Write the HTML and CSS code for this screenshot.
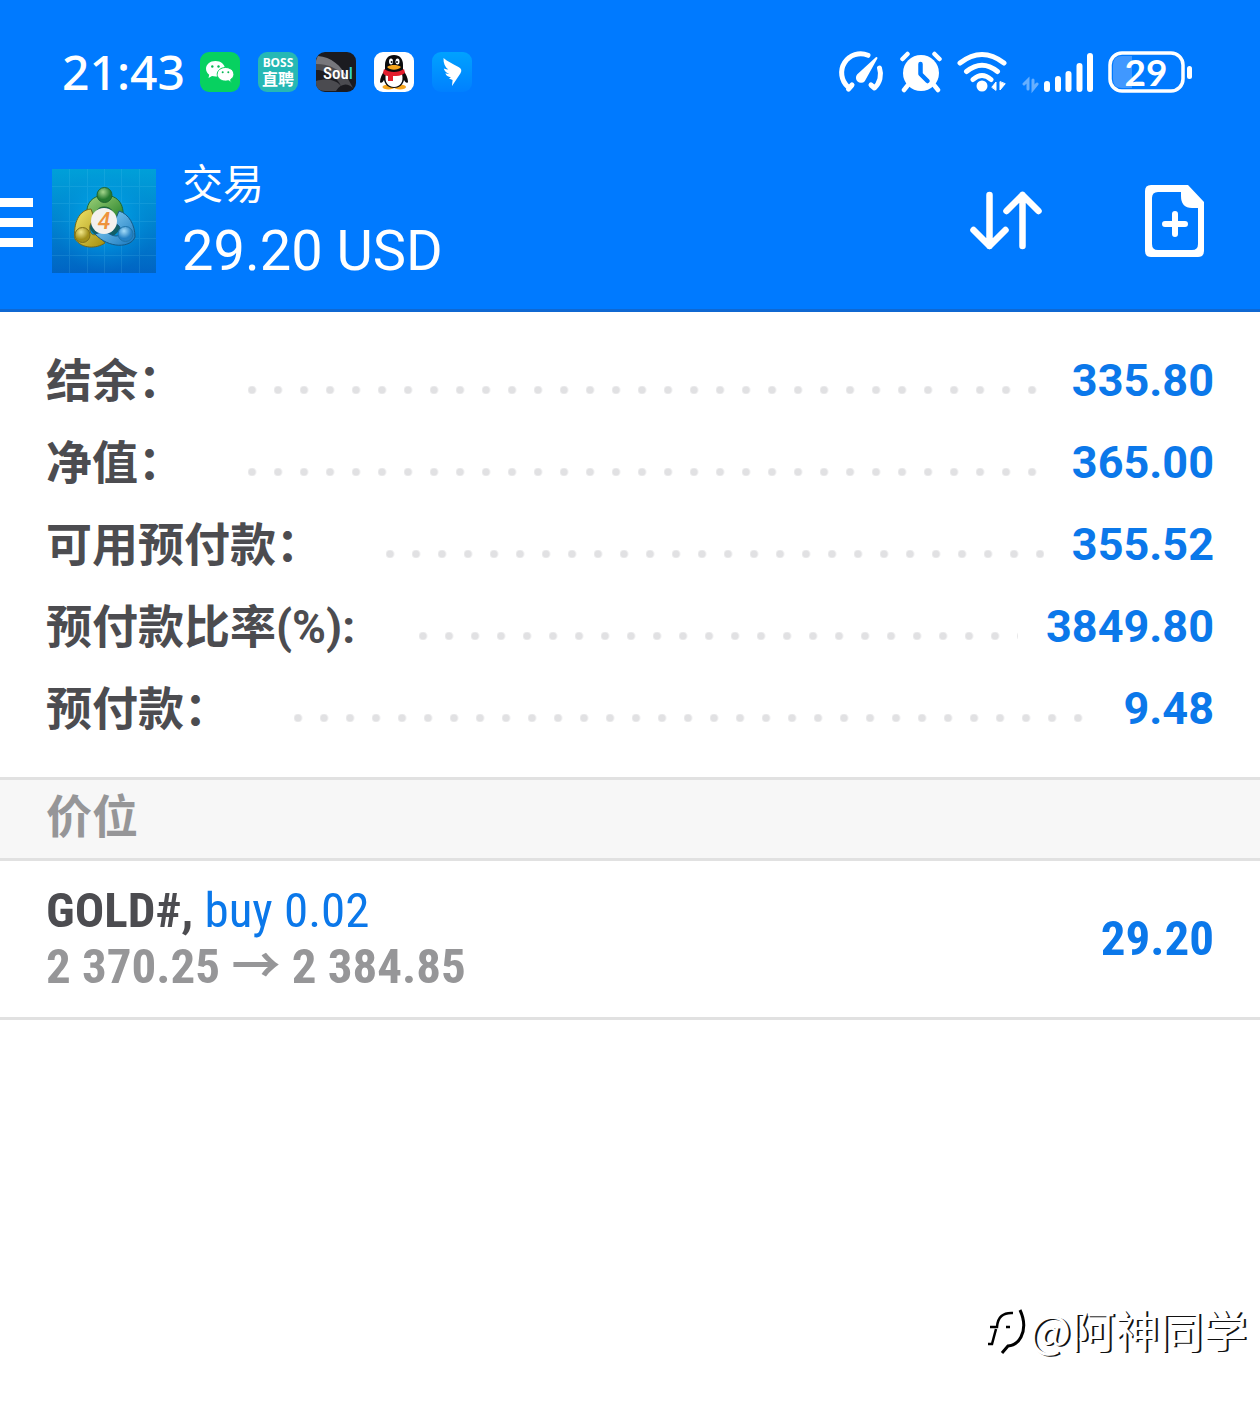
FILE: index.html
```html
<!DOCTYPE html>
<html lang="zh-CN">
<head>
<meta charset="utf-8">
<meta name="viewport" content="width=device-width, initial-scale=1">
<title>交易</title>
<link rel="stylesheet" href="styles.css">
</head>
<body>
<header class="header">
  <div class="status">
    <div class="status-left">
      <time class="clock">21:43</time>
      <svg class="app" viewBox="0 0 40 40" aria-hidden="true">
        <rect width="40" height="40" rx="9" fill="#07d160"/>
        <path d="M15.500 9C10 9 6 12.500 6 16.800c0 2.400 1.200 4.400 3.200 5.900L8.500 26l3.500-1.900c1.200.3 2.300.5 3.500.5 5.300 0 9.500-3.400 9.500-7.800S20.800 9 15.500 9z" fill="#fff"/>
        <path d="M25.500 15.500c-4.700 0-8.300 3-8.300 6.800s3.600 6.800 8.300 6.800c1 0 2-.2 2.900-.4l3 1.700-.8-2.800c2-1.300 3.300-3.100 3.300-5.300 0-3.800-3.700-6.800-8.400-6.800z" fill="#fff" stroke="#07d160"/>
        <g fill="#07b955"><circle cx="12.300" cy="14.500" r="1.200"/><circle cx="18.500" cy="14.500" r="1.200"/><circle cx="22.700" cy="20.300" r="1"/><circle cx="28.300" cy="20.300" r="1"/></g>
      </svg>
      <svg class="app" viewBox="0 0 40 40" aria-hidden="true">
        <rect width="40" height="40" rx="9" fill="#26b8b4"/>
        <text class="boss" x="20" y="15" text-anchor="middle">BOSS</text>
        <text class="boss-cn" x="20" y="33" text-anchor="middle">直聘</text>
      </svg>
      <svg class="app" viewBox="0 0 40 40" aria-hidden="true">
        <rect width="40" height="40" rx="9" fill="#1b1b20"/>
        <path d="M1 5C14 5 27 15 37 36c-5-5-12-5-17 3H9C3 39 0 36 0 31V9z" fill="#4b4b50"/>
        <path d="M2 4c13 1 23 9 30 23C24 18 14 12 0 12V9z" fill="#77777c"/>
        <path d="M3 18c9 2 18 7 22 16C18 26 8 27 0 29V18z" fill="#1d1d22"/>
        <text class="soul" x="7" y="27">Sou<tspan fill="#36d6c3">l</tspan></text>
      </svg>
      <svg class="app" viewBox="0 0 40 40" aria-hidden="true">
        <rect width="40" height="40" rx="9" fill="#fff"/>
        <ellipse cx="14.500" cy="35" rx="6" ry="2.500" fill="#f8a51b"/><ellipse cx="26" cy="35" rx="6" ry="2.500" fill="#f8a51b"/>
        <path d="M20 3c-6 0-9 4-9 10v5c-3 4-5 8-5 12 1 2 3 0 4-2 1 5 5 8 10 8s9-3 10-8c1 2 3 4 4 2 0-4-2-8-5-12v-5c0-6-3-10-9-10z" fill="#0b0b0d"/>
        <path d="M12 22c-2 8 2 13 8 13s10-5 8-13z" fill="#fff"/>
        <path d="M10 17c6 4 14 4 20 0l1 4c-4 3-8 3-12 3v5h-5v-5c-2 0-4-1-5-3z" fill="#e31e2e"/>
        <ellipse cx="17" cy="9.500" rx="2" ry="3" fill="#fff"/><ellipse cx="23.500" cy="9.500" rx="2" ry="3" fill="#fff"/>
        <circle cx="17.600" cy="10" r="1" fill="#111"/><circle cx="23" cy="10" r="1" fill="#111"/>
        <path d="M13 15c4-2.600 10-2.600 14 0-3 3.500-11 3.500-14 0z" fill="#f8a51b"/>
      </svg>
      <svg class="app" viewBox="0 0 40 40" aria-hidden="true">
        <defs><linearGradient id="ding" x1="0" y1="0" x2="0" y2="1"><stop offset="0" stop-color="#00a2ff"/><stop offset="1" stop-color="#0080ff"/></linearGradient></defs>
        <rect width="40" height="40" rx="9" fill="url(#ding)"/>
        <path d="M11.500 6c4 3.500 9 5.800 15 9 3 1.600 3.600 3.500 2 6.300L20 34l.6-6-3.600-1.500 2-1.200c-3-.3-4.800-1.500-5.600-4 1.500.5 2.600.6 4 .5-3.200-.9-5-2.700-5.600-5.300 1.500.7 3 1 4.500 1.100C13 15 11.300 11.200 11.500 6z" fill="#fff"/>
      </svg>
    </div>
    <div class="status-right">
      <svg width="46" height="48" viewBox="0 0 46 48" fill="none" stroke="#fff" stroke-width="5" stroke-linecap="round" stroke-linejoin="round" aria-hidden="true">
        <path d="M14 37 10.500 41Q11 40 10 39A19 19 0 0 1 30 7.300M41.500 20A19 19 0 0 1 36.500 40L33 37"/>
        <path d="M38.500 10 20 27a4 4 0 1 0 6 5.500z" fill="#fff" stroke-width="2"/>
      </svg>
      <svg width="44" height="48" viewBox="0 0 44 48" fill="none" stroke-linecap="round" stroke="#fff" stroke-width="4.500" aria-hidden="true">
        <circle cx="23" cy="25" r="18" fill="#fff" stroke="none"/><path d="m4.500 11 5-5M41.500 11l-5-5M10 37l-4 5M36 37l4 5"/>
        <path d="M22.500 16v10l7 7" stroke="#007aff" stroke-linejoin="round"/>
      </svg>
      <svg width="52" height="48" viewBox="0 0 52 48" fill="none" stroke="#fff" stroke-width="5" stroke-linecap="round" aria-hidden="true">
        <path d="M4 15Q26-2 48 15M10.500 23.500Q26 11 41.500 23.500M17 31.500q9-8 18 0"/>
        <circle cx="26" cy="38" r="5.500" fill="#fff" stroke="none"/>
        <path d="m36 39 4-5v8zM44 34v8l5-6z" fill="#fff" stroke-width="1"/>
      </svg>
      <svg width="72" height="48" viewBox="0 0 72 48" fill="none" stroke="#fff" stroke-width="6" stroke-linecap="round" aria-hidden="true">
        <path d="m2 36 4-4v9M11 32v9l4-5" stroke-width="3" opacity=".4"/>
        <path d="M25 36v5M36 31v10M46.500 26v15M57.500 18v23M68 8v33"/>
      </svg>
      <svg width="86" height="48" viewBox="0 0 86 48" aria-label="电量 29%">
        <rect x="2" y="5" width="73" height="38" rx="12" fill="#007aff" stroke="#fff" stroke-width="3.500"/>
        <path d="M14 8h10v32H14q-9 0-9-9V17q0-9 9-9z" fill="#4098ff"/>
        <rect x="79" y="18" width="5" height="13" rx="2.500" fill="#fff"/>
        <text class="battery-text" x="38" y="38" text-anchor="middle">29</text>
      </svg>
    </div>
  </div>
  <div class="appbar">
    <button class="menu" aria-label="菜单"><span></span><span></span><span></span></button>
    <svg class="logo" viewBox="0 0 104 104" aria-hidden="true">
      <defs>
        <linearGradient id="sky" x1="0" y1="0" x2="0" y2="1"><stop offset="0" stop-color="#00b4e0"/><stop offset=".5" stop-color="#008dd2"/><stop offset="1" stop-color="#005fc2"/></linearGradient>
        <radialGradient id="edge"><stop offset=".3" stop-color="#00a5ec" stop-opacity=".7"/><stop offset="1" stop-color="#0070c8" stop-opacity=".3"/></radialGradient>
        <linearGradient id="green" x1="0" y1="0" x2="1" y2="1"><stop offset="0" stop-color="#a3d47c"/><stop offset="1" stop-color="#1d7c24"/></linearGradient>
        <linearGradient id="gold" x1="0" y1="0" x2="1" y2="1"><stop offset="0" stop-color="#f1e66b"/><stop offset="1" stop-color="#a48d0c"/></linearGradient>
        <linearGradient id="blue" x1="0" y1="0" x2="1" y2="1"><stop offset="0" stop-color="#95dafa"/><stop offset="1" stop-color="#1575bd"/></linearGradient>
        <radialGradient id="green-head" cx=".4" cy=".3"><stop offset="0" stop-color="#a5d68c"/><stop offset="1" stop-color="#257a30"/></radialGradient>
        <radialGradient id="gold-head" cx=".4" cy=".3"><stop offset="0" stop-color="#f3e98a"/><stop offset="1" stop-color="#a39018"/></radialGradient>
        <radialGradient id="blue-head" cx=".4" cy=".3"><stop offset="0" stop-color="#a5dcf8"/><stop offset="1" stop-color="#2380c4"/></radialGradient>
      </defs>
      <rect width="104" height="104" fill="url(#sky)"/><rect width="104" height="104" fill="url(#edge)"/>
      <path d="M17.500 0v104M35.500 0v104M52.500 0v104M69.500 0v104M87.500 0v104M0 17.500h104M0 34.500h104M0 52.500h104M0 69.500h104M0 86.500h104" stroke="#6fd2f5" opacity=".15"/>
      <circle cx="53" cy="52" r="17" fill="#126068"/>
      <g stroke-width="1">
        <path d="M36 51C32 36 39 27 52 26c15 0 22 11 18 27l-9-3c1-8-2-12-9-12-6 0-8 4-8 9z" fill="url(#green)" stroke="#1e6530"/>
        <path d="M39 40C27 41 21 54 23 70c7 10 21 10 30 4l-7-9c-5 2-7 0-8-3-1-6 1-9 5-11z" fill="url(#gold)" stroke="#746719"/>
        <path d="M67 42c10 3 16 14 16 26-4 11-26 12-40-3l10-3c9 7 15 6 16 1 0-5-3-8-7-9z" fill="url(#blue)" stroke="#165984"/>
        <circle cx="52.500" cy="26" r="7.500" fill="url(#green-head)" stroke="#1e6530"/>
        <circle cx="30.500" cy="66" r="7.500" fill="url(#gold-head)" stroke="#807018"/>
        <circle cx="73.500" cy="65" r="7.500" fill="url(#blue-head)" stroke="#1e74aa"/>
      </g>
      <circle cx="52" cy="52" r="13" fill="#f3f1ee"/>
      <text class="logo-text" x="52" y="60" text-anchor="middle">4</text>
    </svg>
    <div class="titles">
      <h1 class="title">交易</h1>
      <p class="profit">29.20 USD</p>
    </div>
    <div class="actions">
      <button class="action" aria-label="排序">
        <svg width="72" height="60" viewBox="0 0 72 60" fill="none" stroke="#fff" stroke-width="6.500" stroke-linecap="round" stroke-linejoin="round"><path d="M19.500 4v51M3.500 39l16 16 16-16M52.500 55V4M36.500 20l16-16 16 16"/></svg>
      </button>
      <button class="action" aria-label="新订单">
        <svg width="60" height="72" viewBox="0 0 60 72" fill="none" stroke="#fff"><path d="M6 0h37l16 17v49q0 6-6 6H6q-6 0-6-6V6q0-6 6-6zM13 7Q7 7 7 13v46q0 6 6 6h34q6 0 6-6V23h-6Q36 23 36 11V7z" fill="#fff" fill-rule="evenodd" stroke="none"/><path d="M30 29v20M20 39h20" stroke-width="6" stroke-linecap="round"/></svg>
      </button>
    </div>
  </div>
</header>
<main class="content">
  <dl class="summary">
    <div class="row"><dt>结余：</dt><dd>335.80</dd></div>
    <div class="row"><dt>净值：</dt><dd>365.00</dd></div>
    <div class="row"><dt>可用预付款：</dt><dd>355.52</dd></div>
    <div class="row"><dt>预付款比率(%):</dt><dd>3849.80</dd></div>
    <div class="row"><dt>预付款：</dt><dd>9.48</dd></div>
  </dl>
  <h2 class="section">价位</h2>
  <article class="position">
    <div>
      <p class="symbol"><strong>GOLD#,</strong> <span class="side">buy 0.02</span></p>
      <p class="prices">2 370.25 <span class="arrow">→</span> 2 384.85</p>
    </div>
    <p class="gain">29.20</p>
  </article>
</main>
<footer class="watermark">
  <svg width="44" height="56" viewBox="0 0 44 56" fill="none" aria-hidden="true">
    <path d="M3 43 7 43 11 28M5 26h7Q13 11 28 12M21 26h4" stroke="#000" stroke-width="2.500"/>
    <path d="M35 9Q42 24 36 36q-4 8-13 9l-6 7" stroke="#000" stroke-width="3"/>
  </svg>
  <span>@阿神同学</span>
</footer>
</body>
</html>
```
FILE: styles.css
```css
* { box-sizing: border-box; }

body {
  margin: 0;
  min-height: 100vh;
  display: flex;
  flex-direction: column;
  background: #fff;
  color: #4c4c50;
  font-family: Roboto, "Noto Sans CJK SC", sans-serif;
}

h1, h2, p, dl, dd { margin: 0; }
svg { display: block; flex: none; }

button {
  border: 0;
  padding: 0;
  background: none;
  cursor: pointer;
}

.header {
  background: #007aff;
  border-bottom: 3px solid #0f68d2;
  color: #fff;
}

.status {
  display: flex;
  justify-content: space-between;
  align-items: center;
  height: 133px;
  padding: 11px 66px 0 62px;
}

.status-left { display: flex; align-items: center; gap: 18px; }
.clock {
  margin-right: -3px;
  font: 500 48px/60px "Noto Sans", sans-serif;
}
.app { width: 40px; height: 40px; }
.boss { font: 700 12px "Noto Sans", sans-serif; fill: #fff; }
.boss-cn { font: 700 16px "Noto Sans CJK SC", sans-serif; fill: #fff; }
.soul { font: 500 17px "Roboto Condensed", "Liberation Sans Narrow", sans-serif; fill: #fff; }
.status-right { display: flex; align-items: center; gap: 14px; }
.battery-text { font: 700 37px Lato, sans-serif; fill: #fff; }

.appbar {
  display: flex;
  align-items: center;
  height: 176px;
  padding-right: 55px;
}

.menu {
  display: flex;
  flex-direction: column;
  gap: 11px;
  width: 33px;
  padding-top: 3px;
}
.menu span { height: 9px; background: #fff; }

.logo { width: 104px; height: 104px; margin-left: 19px; }
.logo-text { font: italic 500 23px Roboto, sans-serif; fill: #ee923c; }

.titles { flex: 1; margin-left: 26px; }
.title { font-size: 41px; font-weight: 400; line-height: 60px; }
.profit { font-size: 56px; line-height: 72px; }

.actions { display: flex; align-items: center; gap: 103px; }

.summary { padding: 28px 46px 27px; }
.row {
  display: flex;
  align-items: center;
  height: 82px;
  font-size: 46px;
  font-weight: 700;
  line-height: 82px;
}
.row dt { display: contents; }
.row dt::after {
  content: "";
  flex: 1;
  height: 8px;
  margin: 18px 28px 0 64px;
  background: radial-gradient(circle at 4px 4px, #e1e1e3 3px, transparent 5px) 0 0 / 26px 8px repeat-x;
}
.row dd { color: #0b78ea; font-size: 45px; }

.section {
  padding: 0 46px 4px;
  border: solid #e1e1e1;
  border-width: 3px 0;
  background: #f7f7f7;
  color: #969698;
  font-size: 46px;
  font-weight: 700;
  line-height: 74px;
}

.position {
  display: flex;
  justify-content: space-between;
  align-items: center;
  padding: 22px 46px;
  border-bottom: 3px solid #e1e1e1;
  font-family: "Roboto Condensed", "Liberation Sans Narrow", "Noto Sans CJK SC", sans-serif;
  font-size: 49px;
  line-height: 56px;
}
.side { color: #0b78ea; }
.prices { color: #969698; font-weight: 700; }
.arrow { font-family: "Noto Sans CJK SC", sans-serif; line-height: 0; }
.gain { color: #0b78ea; font-weight: 700; }

.watermark {
  display: flex;
  justify-content: flex-end;
  align-items: center;
  margin-top: auto;
  padding: 0 13px 45px;
  color: #fff;
  font: 400 44px/56px "Noto Sans CJK SC", sans-serif;
  text-shadow: 2px 1px 0 #111;
}
```
